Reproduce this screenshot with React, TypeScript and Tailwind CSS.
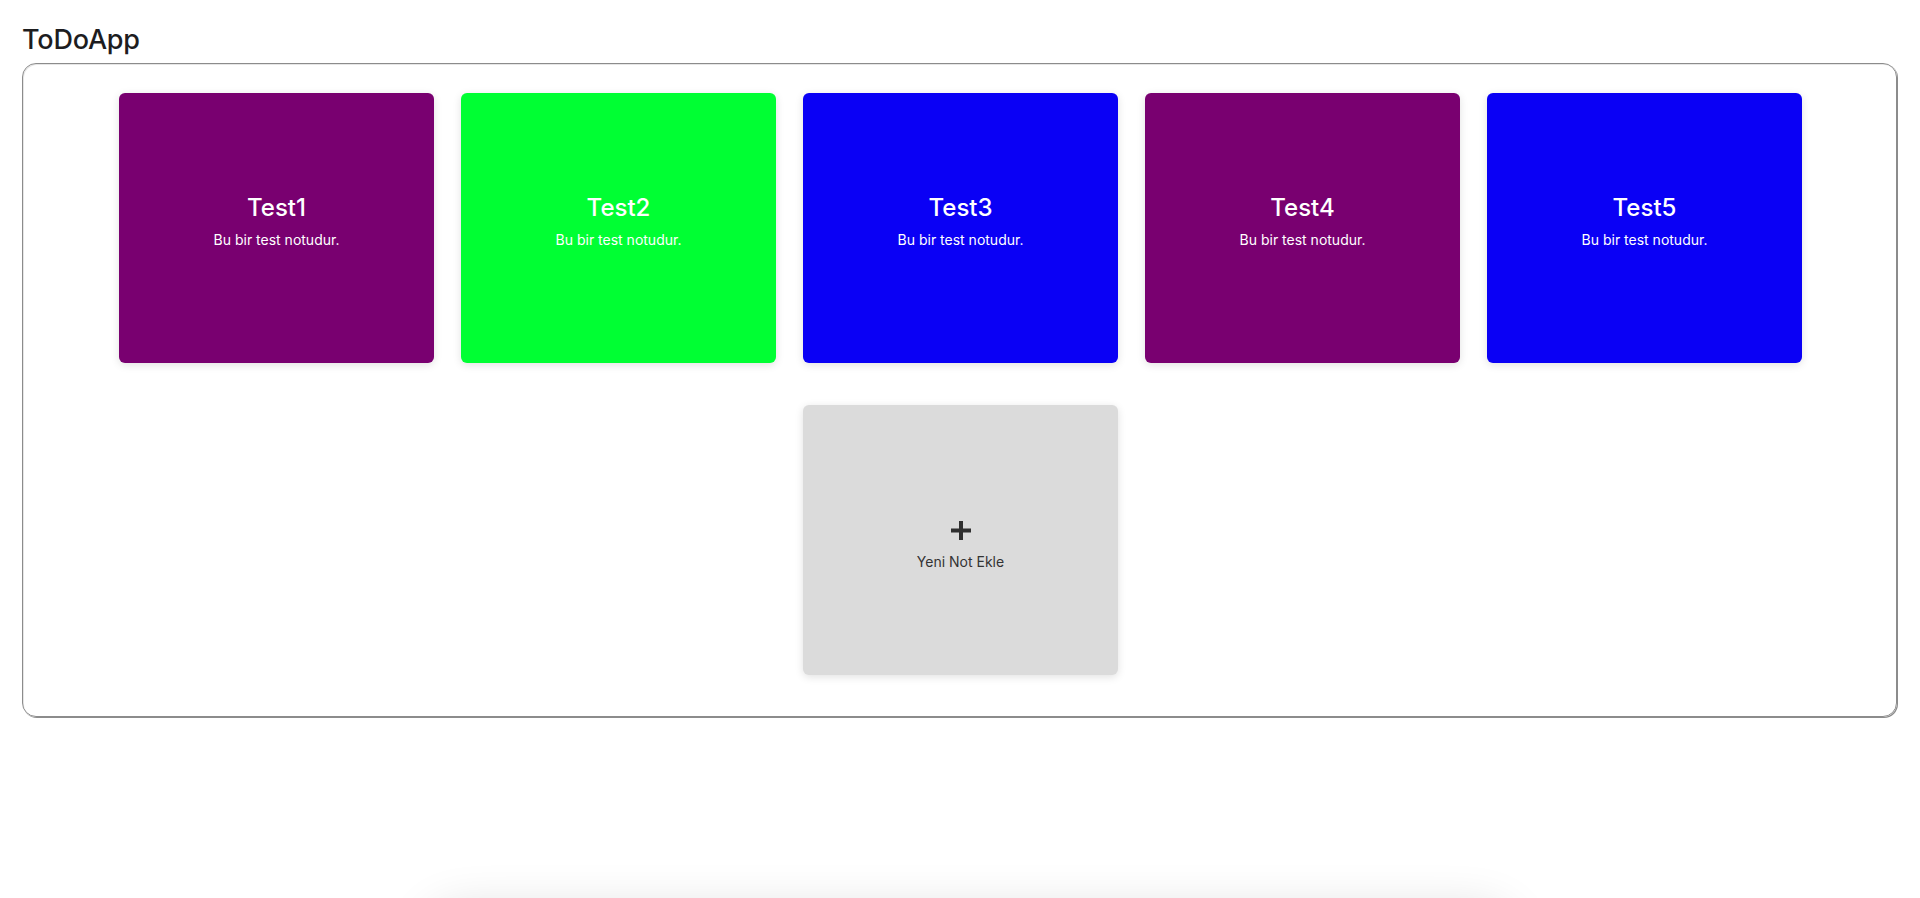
import React from "react";

const notes = [
  { title: "Test1", color: "bg-[#790070]" },
  { title: "Test2", color: "bg-[#00ff33]" },
  { title: "Test3", color: "bg-[#0a00f5]" },
  { title: "Test4", color: "bg-[#790070]" },
  { title: "Test5", color: "bg-[#0a00f5]" },
];

function PlusIcon() {
  return (
    <svg width="20" height="19" viewBox="0 0 20 19" className="block">
      <rect x="0" y="7.5" width="20" height="4" fill="#2f2f2f" />
      <rect x="8" y="0" width="4" height="19" fill="#2f2f2f" />
    </svg>
  );
}

export default function App() {
  return (
    <div
      className="min-h-[898px] bg-white px-[22px] relative overflow-hidden"
      style={{ fontFamily: "Inter, 'Noto Sans', sans-serif" }}
    >
      <h1 className="pt-[23px] h-[63px] text-[27px] leading-[34px] font-medium text-[#1d1d1f] tracking-[-0.2px]">
        ToDoApp
      </h1>
      <div className="w-[1875px] h-[654px] rounded-[14px] border border-[#8c8c8c] shadow-[1px_1px_0_#8c8c8c,inset_1px_1px_0_#e6e6e6] pt-[29px]">
        <div className="flex flex-wrap justify-center gap-x-[27px] gap-y-[42px] pl-[2px]">
          {notes.map((n) => (
            <div
              key={n.title}
              className={`${n.color} w-[315px] h-[270px] rounded-[6px] shadow-[0_2px_8px_rgba(0,0,0,0.12)] flex flex-col items-center justify-center pb-[15px] text-white`}
            >
              <h2 className="text-[24px] leading-[29px] font-medium">{n.title}</h2>
              <p className="mt-[9px] text-[14px] leading-[17px]">Bu bir test notudur.</p>
            </div>
          ))}
          <div className="bg-[#dbdbdb] w-[315px] h-[270px] rounded-[6px] shadow-[0_2px_8px_rgba(0,0,0,0.12)] flex flex-col items-center justify-center pt-[11px] text-[#333333]">
            <PlusIcon />
            <p className="mt-[13px] text-[14px] leading-[17px]">Yeni Not Ekle</p>
          </div>
        </div>
      </div>
      <div className="fixed left-[430px] top-[912px] w-[1080px] h-[200px] rounded-[30px] bg-white shadow-[0_0_50px_rgba(0,0,0,0.16)]" />
    </div>
  );
}
